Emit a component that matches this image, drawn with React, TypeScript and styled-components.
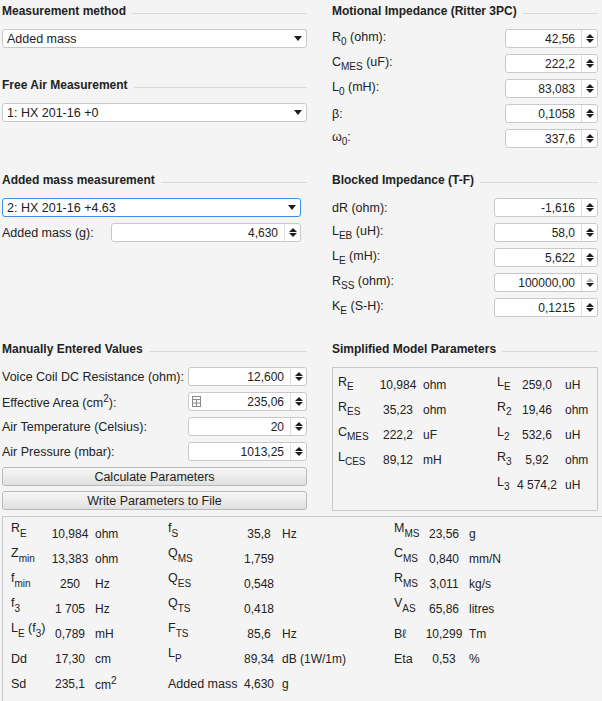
import React from 'react';
import styled, { createGlobalStyle } from 'styled-components';

const GlobalStyle = createGlobalStyle`
  html, body {
    margin: 0;
    padding: 0;
    background: #f4f4f4;
  }
  body {
    font-family: 'Liberation Sans', Arial, sans-serif;
    color: #222;
    overflow: hidden;
  }
`;

const Window = styled.div`
  width: 602px;
  height: 701px;
  overflow: hidden;
  background: #f4f4f4;
  font-size: 12.5px;
`;

const Columns = styled.div`
  display: grid;
  grid-template-columns: 305px 266px;
  column-gap: 25px;
  row-gap: 25px;
  padding: 4px 0 0 2px;
  align-items: start;
`;

const Section = styled.section`
  display: flex;
  flex-direction: column;
`;

const Title = styled.div<{ $top?: number }>`
  display: flex;
  align-items: center;
  gap: 6px;
  height: 14px;
  margin-top: ${p => p.$top ?? 0}px;
  margin-bottom: 11px;
  font-size: 12px;
  font-weight: bold;
  white-space: nowrap;
  &::after {
    content: '';
    flex: 1;
    height: 1px;
    margin-top: 5px;
    background: #dadada;
  }
`;

const SelectBox = styled.div<{ $focused?: boolean; $inset?: number }>`
  height: 19px;
  box-sizing: border-box;
  margin-right: ${p => p.$inset ?? 0}px;
  padding: 0 4px;
  display: flex;
  align-items: center;
  justify-content: space-between;
  background: #fff;
  border: 1px solid ${p => (p.$focused ? '#3d8fe3' : '#c9c9c9')};
  border-radius: 3px;
  white-space: nowrap;
`;

const Caret = styled.span`
  width: 0;
  height: 0;
  border-left: 4.5px solid transparent;
  border-right: 4.5px solid transparent;
  border-top: 5px solid #1e1e1e;
`;

const Rows = styled.div<{ $inset?: number }>`
  display: flex;
  flex-direction: column;
  gap: 6px;
  margin-right: ${p => p.$inset ?? 0}px;
`;

const Row = styled.div`
  display: flex;
  align-items: center;
  justify-content: space-between;
  height: 19px;
  white-space: nowrap;
`;

const Sub = styled.sub`
  font-size: 10px;
`;

const Sup = styled.sup`
  font-size: 10px;
`;

const Spin = styled.div<{ $width: number }>`
  width: ${p => p.$width}px;
  height: 19px;
  box-sizing: border-box;
  display: flex;
  background: #fff;
  border: 1px solid #c9c9c9;
  border-radius: 3px;
  flex-shrink: 0;
`;

const SpinField = styled.div`
  flex: 1;
  display: flex;
  align-items: center;
  padding: 0 6px 0 3px;
  font-size: 12px;
`;

const SpinText = styled.span`
  margin-left: auto;
`;

const SpinButtons = styled.div`
  width: 15px;
  border-left: 1px solid #dedede;
  display: flex;
  flex-direction: column;
  align-items: center;
  justify-content: center;
  gap: 1px;
`;

const Arrow = styled.span<{ $up?: boolean; $off?: boolean }>`
  width: 0;
  height: 0;
  border-left: 4px solid transparent;
  border-right: 4px solid transparent;
  ${p =>
    p.$up
      ? `border-bottom: 4px solid ${p.$off ? '#b4b4b4' : '#1e1e1e'};`
      : `border-top: 4px solid ${p.$off ? '#b4b4b4' : '#1e1e1e'};`}
`;

const Buttons = styled.div`
  display: flex;
  flex-direction: column;
  gap: 5px;
  margin-top: 6px;
`;

const Button = styled.button`
  height: 19px;
  width: 100%;
  padding: 0;
  border: 1px solid #b9b9b9;
  border-radius: 3px;
  background: linear-gradient(#f7f7f7, #e0e0e0);
  font-family: inherit;
  font-size: 12.5px;
  color: #222;
`;

const ModelBox = styled.div`
  height: 144px;
  box-sizing: border-box;
  border: 1px solid #c9c9c9;
  padding: 4px 0 0 5px;
  display: grid;
  grid-template-columns: 40px 40px 79px 20px 40px 1fr;
  grid-auto-rows: 25px;
  align-items: center;
  white-space: nowrap;
`;

const Results = styled.div`
  margin: 5px 0 0 2px;
  width: 640px;
  height: 200px;
  box-sizing: border-box;
  border: 1px solid #c9c9c9;
  padding: 4px 0 0 8px;
  display: grid;
  grid-template-columns: 39px 40px 78px 73px 36px 117px 30px 40px 80px;
  grid-auto-rows: 25px;
  align-items: center;
  white-space: nowrap;
`;

const Sym = styled.span`
  line-height: 14px;
`;

const Value = styled.span`
  font-size: 12px;
  text-align: center;
`;

const Unit = styled.span<{ $pad?: number }>`
  font-size: 12px;
  padding-left: ${p => p.$pad ?? 5}px;
`;

// main letter sits higher, subscript on the value baseline
const Raised = styled.span`
  vertical-align: 5px;
  line-height: 0;
`;

const Low = styled.span`
  font-size: 10px;
`;

function CalcIcon() {
  return (
    <svg width="9" height="11" viewBox="0 0 9 11" fill="none" stroke="#8a8a8a" strokeWidth="1">
      <rect x="0.5" y="0.5" width="8" height="10" />
      <path d="M0.5 3.5H8.5M4.5 3.5V10.5M0.5 7H8.5" />
    </svg>
  );
}

function SpinBox({ value, width, upOff, icon }: { value: string; width: number; upOff?: boolean; icon?: boolean }) {
  return (
    <Spin $width={width}>
      <SpinField>
        {icon && <CalcIcon />}
        <SpinText>{value}</SpinText>
      </SpinField>
      <SpinButtons>
        <Arrow $up $off={upOff} />
        <Arrow />
      </SpinButtons>
    </Spin>
  );
}

function Dropdown({ text, focused, inset }: { text: string; focused?: boolean; inset?: number }) {
  return (
    <SelectBox $focused={focused} $inset={inset}>
      <span>{text}</span>
      <Caret />
    </SelectBox>
  );
}

type Field = { label: React.ReactNode; value: string; upOff?: boolean; icon?: boolean };

const motional: Field[] = [
  { label: <>R<Sub>0</Sub> (ohm):</>, value: '42,56' },
  { label: <>C<Sub>MES</Sub> (uF):</>, value: '222,2' },
  { label: <>L<Sub>0</Sub> (mH):</>, value: '83,083' },
  { label: <>β:</>, value: '0,1058' },
  { label: <>ω<Sub>0</Sub>:</>, value: '337,6' },
];

const blocked: Field[] = [
  { label: <>dR (ohm):</>, value: '-1,616' },
  { label: <>L<Sub>EB</Sub> (uH):</>, value: '58,0' },
  { label: <>L<Sub>E</Sub> (mH):</>, value: '5,622' },
  { label: <>R<Sub>SS</Sub> (ohm):</>, value: '100000,00', upOff: true },
  { label: <>K<Sub>E</Sub> (S-H):</>, value: '0,1215' },
];

const manual: Field[] = [
  { label: <>Voice Coil DC Resistance (ohm):</>, value: '12,600' },
  { label: <>Effective Area (cm<Sup>2</Sup>):</>, value: '235,06', icon: true },
  { label: <>Air Temperature (Celsius):</>, value: '20' },
  { label: <>Air Pressure (mbar):</>, value: '1013,25' },
];

type Cell = [React.ReactNode, string, React.ReactNode];

const model: Cell[][] = [
  [[<>R<Sub>E</Sub></>, '10,984', 'ohm'], [<>L<Sub>E</Sub></>, '259,0', 'uH']],
  [[<>R<Sub>ES</Sub></>, '35,23', 'ohm'], [<>R<Sub>2</Sub></>, '19,46', 'ohm']],
  [[<>C<Sub>MES</Sub></>, '222,2', 'uF'], [<>L<Sub>2</Sub></>, '532,6', 'uH']],
  [[<>L<Sub>CES</Sub></>, '89,12', 'mH'], [<>R<Sub>3</Sub></>, '5,92', 'ohm']],
  [['', '', ''], [<>L<Sub>3</Sub></>, '4 574,2', 'uH']],
];

const sym = (main: string, low: string) => (
  <>
    <Raised>{main}</Raised>
    <Low>{low}</Low>
  </>
);

const results: Cell[][] = [
  [[sym('R', 'E'), '10,984', 'ohm'], [sym('f', 'S'), '35,8', 'Hz'], [sym('M', 'MS'), '23,56', 'g']],
  [[sym('Z', 'min'), '13,383', 'ohm'], [sym('Q', 'MS'), '1,759', ''], [sym('C', 'MS'), '0,840', 'mm/N']],
  [[sym('f', 'min'), '250', 'Hz'], [sym('Q', 'ES'), '0,548', ''], [sym('R', 'MS'), '3,011', 'kg/s']],
  [[sym('f', '3'), '1 705', 'Hz'], [sym('Q', 'TS'), '0,418', ''], [sym('V', 'AS'), '65,86', 'litres']],
  [
    [<>{sym('L', 'E')} {sym('(f', '3')}<Raised>)</Raised></>, '0,789', 'mH'],
    [sym('F', 'TS'), '85,6', 'Hz'],
    ['Bℓ', '10,299', 'Tm'],
  ],
  [['Dd', '17,30', 'cm'], [sym('L', 'P'), '89,34', 'dB (1W/1m)'], ['Eta', '0,53', '%']],
  [['Sd', '235,1', <>cm<Sup>2</Sup></>], ['Added mass', '4,630', 'g'], ['', '', '']],
];

export default function App() {
  return (
    <Window>
      <GlobalStyle />
      <Columns>
        <Section>
          <Title>Measurement method</Title>
          <Dropdown text="Added mass" />
          <Title $top={30}>Free Air Measurement</Title>
          <Dropdown text="1: HX 201-16 +0" />
        </Section>
        <Section>
          <Title>Motional Impedance (Ritter 3PC)</Title>
          <Rows>
            {motional.map((f, i) => (
              <Row key={i}>
                <span>{f.label}</span>
                <SpinBox value={f.value} width={93} />
              </Row>
            ))}
          </Rows>
        </Section>

        <Section>
          <Title>Added mass measurement</Title>
          <Rows $inset={6}>
            <Dropdown text="2: HX 201-16 +4.63" focused />
            <Row>
              <span>Added mass (g):</span>
              <SpinBox value="4,630" width={190} />
            </Row>
          </Rows>
        </Section>
        <Section>
          <Title>Blocked Impedance (T-F)</Title>
          <Rows>
            {blocked.map((f, i) => (
              <Row key={i}>
                <span>{f.label}</span>
                <SpinBox value={f.value} width={104} upOff={f.upOff} />
              </Row>
            ))}
          </Rows>
        </Section>

        <Section>
          <Title>Manually Entered Values</Title>
          <Rows>
            {manual.map((f, i) => (
              <Row key={i}>
                <span>{f.label}</span>
                <SpinBox value={f.value} width={119} icon={f.icon} />
              </Row>
            ))}
          </Rows>
          <Buttons>
            <Button>Calculate Parameters</Button>
            <Button>Write Parameters to File</Button>
          </Buttons>
        </Section>
        <Section>
          <Title>Simplified Model Parameters</Title>
          <ModelBox>
            {model.map((row, r) =>
              row.map(([label, value, unit], c) => (
                <React.Fragment key={`${r}-${c}`}>
                  <Sym>{label}</Sym>
                  <Value>{value}</Value>
                  <Unit $pad={c === 0 ? 5 : 8}>{unit}</Unit>
                </React.Fragment>
              ))
            )}
          </ModelBox>
        </Section>
      </Columns>

      <Results>
        {results.map((row, r) =>
          row.map(([label, value, unit], c) => (
            <React.Fragment key={`${r}-${c}`}>
              <Sym>{label}</Sym>
              <Value>{value}</Value>
              <Unit>{unit}</Unit>
            </React.Fragment>
          ))
        )}
      </Results>
    </Window>
  );
}
